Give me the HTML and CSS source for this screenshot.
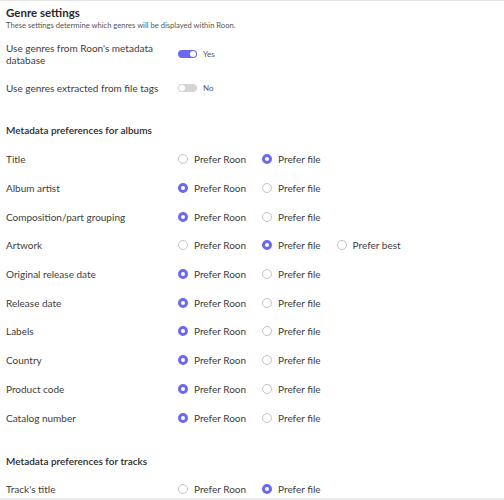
FILE: index.html
```html
<!DOCTYPE html>
<html>
  <head>
    <title>Library settings</title>
    <link rel="stylesheet" href="styles.css">
  </head>
  <body>
    <div class="page">
      <div class="section-head">
        <h2>Genre settings</h2>
        <p class="hint">These settings determine which genres will be displayed within Roon.</p>
      </div>

      <div class="toggle-row first">
        <div class="label">Use genres from Roon's metadata database</div>
        <div class="control">
          <span class="toggle on"></span> <span class="state">Yes</span>
        </div>
      </div>
      <div class="toggle-row">
        <div class="label">Use genres extracted from file tags</div>
        <div class="control">
          <span class="toggle"></span> <span class="state">No</span>
        </div>
      </div>

      <h3 class="group-title albums">Metadata preferences for albums</h3>
      <div class="pref-list">
        <div class="pref-row">
          <div class="label">Title</div>
          <div class="options">
            <label class="option"><span class="radio"></span>Prefer Roon</label>
            <label class="option"><span class="radio checked"></span>Prefer file</label>
          </div>
        </div>
        <div class="pref-row">
          <div class="label">Album artist</div>
          <div class="options">
            <label class="option"><span class="radio checked"></span>Prefer Roon</label>
            <label class="option"><span class="radio"></span>Prefer file</label>
          </div>
        </div>
        <div class="pref-row">
          <div class="label">Composition/part grouping</div>
          <div class="options">
            <label class="option"><span class="radio checked"></span>Prefer Roon</label>
            <label class="option"><span class="radio"></span>Prefer file</label>
          </div>
        </div>
        <div class="pref-row">
          <div class="label">Artwork</div>
          <div class="options">
            <label class="option"><span class="radio"></span>Prefer Roon</label>
            <label class="option"><span class="radio checked"></span>Prefer file</label>
            <label class="option"><span class="radio"></span>Prefer best</label>
          </div>
        </div>
        <div class="pref-row">
          <div class="label">Original release date</div>
          <div class="options">
            <label class="option"><span class="radio checked"></span>Prefer Roon</label>
            <label class="option"><span class="radio"></span>Prefer file</label>
          </div>
        </div>
        <div class="pref-row">
          <div class="label">Release date</div>
          <div class="options">
            <label class="option"><span class="radio checked"></span>Prefer Roon</label>
            <label class="option"><span class="radio"></span>Prefer file</label>
          </div>
        </div>
        <div class="pref-row">
          <div class="label">Labels</div>
          <div class="options">
            <label class="option"><span class="radio checked"></span>Prefer Roon</label>
            <label class="option"><span class="radio"></span>Prefer file</label>
          </div>
        </div>
        <div class="pref-row">
          <div class="label">Country</div>
          <div class="options">
            <label class="option"><span class="radio checked"></span>Prefer Roon</label>
            <label class="option"><span class="radio"></span>Prefer file</label>
          </div>
        </div>
        <div class="pref-row">
          <div class="label">Product code</div>
          <div class="options">
            <label class="option"><span class="radio checked"></span>Prefer Roon</label>
            <label class="option"><span class="radio"></span>Prefer file</label>
          </div>
        </div>
        <div class="pref-row">
          <div class="label">Catalog number</div>
          <div class="options">
            <label class="option"><span class="radio checked"></span>Prefer Roon</label>
            <label class="option"><span class="radio"></span>Prefer file</label>
          </div>
        </div>
      </div>

      <h3 class="group-title tracks">Metadata preferences for tracks</h3>
      <div class="pref-list">
        <div class="pref-row">
          <div class="label">Track's title</div>
          <div class="options">
            <label class="option"><span class="radio"></span>Prefer Roon</label>
            <label class="option"><span class="radio checked"></span>Prefer file</label>
          </div>
        </div>
      </div>
    </div>
    <div class="footer-bar"></div>
  </body>
</html>
```

FILE: styles.css
```css
html, body {
  margin: 0;
  padding: 0;
  height: 500px;
  overflow: hidden;
  background: #fff;
}
body {
  font-family: Lato, "Liberation Sans", sans-serif;
  font-size: 10px;
  color: #3d3d3d;
  border-top: 1px solid #e6e6e6;
  position: relative;
}
.page {
  padding: 0 6px;
}
.section-head {
  padding-top: 5px;
}
.section-head h2 {
  margin: 0;
  font-size: 11.5px;
  font-weight: bold;
  color: #2a2a2a;
  line-height: 14px;
}
.hint {
  margin: 0;
  font-size: 7.6px;
  color: #555;
  line-height: 10px;
}
.toggle-row {
  display: flex;
  align-items: center;
  min-height: 24px;
}
.toggle-row.first {
  margin-top: 12px;
  margin-bottom: 10px;
}
.toggle-row .label {
  width: 172px;
  line-height: 12px;
}
.control {
  display: flex;
  align-items: center;
  gap: 6px;
  font-size: 8px;
  color: #555;
}
.toggle {
  position: relative;
  display: inline-block;
  width: 19px;
  height: 8px;
  border-radius: 4px;
  background: #d4d4d4;
}
.toggle::after {
  content: "";
  position: absolute;
  top: 1px;
  left: 1px;
  width: 6px;
  height: 6px;
  border-radius: 50%;
  background: #fff;
}
.toggle.on {
  background: #6b69ee;
}
.toggle.on::after {
  left: 12px;
}
.group-title {
  margin: 0;
  font-size: 10px;
  font-weight: 600;
  color: #2a2a2a;
  line-height: 14px;
}
.group-title.albums {
  margin-top: 23px;
  margin-bottom: 8px;
}
.group-title.tracks {
  margin-top: 22px;
  margin-bottom: 7px;
}
.pref-row {
  display: flex;
  align-items: center;
  height: 28.7px;
}
.pref-row .label {
  width: 172px;
}
.options {
  display: flex;
  align-items: center;
  gap: 16px;
}
.option {
  display: flex;
  align-items: center;
  gap: 6px;
}
.radio {
  box-sizing: border-box;
  width: 10px;
  height: 10px;
  border-radius: 50%;
  border: 1px solid #c4c4c4;
  background: #fff;
}
.radio.checked {
  border: 3px solid #6b69ee;
}
.footer-bar {
  position: absolute;
  left: 0;
  right: 0;
  bottom: 0;
  height: 3px;
  background: #ececec;
}
```
